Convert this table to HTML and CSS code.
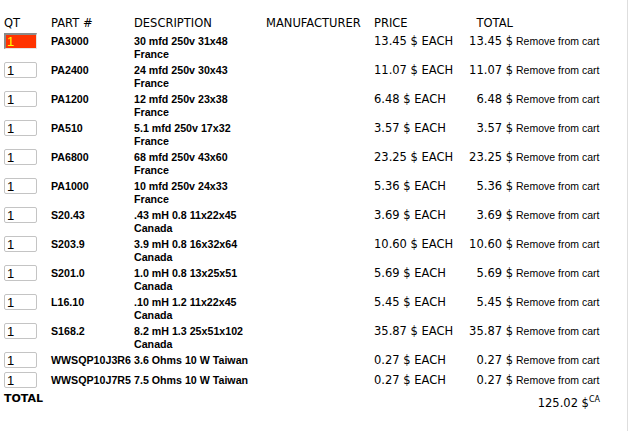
FILE: index.html
```html
<!DOCTYPE html>
<html lang="en">
<head>
<meta charset="utf-8">
<title>Cart</title>
<link rel="stylesheet" href="styles.css">
</head>
<body>
<div class="page">
<table class="cart">
<colgroup>
<col class="c-qty"><col class="c-part"><col class="c-desc"><col class="c-manuf"><col class="c-price"><col class="c-amount"><col class="c-link">
</colgroup>
<thead>
<tr><th>QT</th><th>PART #</th><th>DESCRIPTION</th><th>MANUFACTURER</th><th>PRICE</th><th class="amount">TOTAL</th><th></th></tr>
</thead>
<tbody>
<tr><td class="qty"><input class="qty-input alert" value="1"></td><td class="part">PA3000</td><td class="desc">30 mfd 250v 31x48<br>France</td><td></td><td class="price">13.45 $ EACH</td><td class="amount">13.45 $</td><td class="link">Remove from cart</td></tr>
<tr><td class="qty"><input class="qty-input" value="1"></td><td class="part">PA2400</td><td class="desc">24 mfd 250v 30x43<br>France</td><td></td><td class="price">11.07 $ EACH</td><td class="amount">11.07 $</td><td class="link">Remove from cart</td></tr>
<tr><td class="qty"><input class="qty-input" value="1"></td><td class="part">PA1200</td><td class="desc">12 mfd 250v 23x38<br>France</td><td></td><td class="price">6.48 $ EACH</td><td class="amount">6.48 $</td><td class="link">Remove from cart</td></tr>
<tr><td class="qty"><input class="qty-input" value="1"></td><td class="part">PA510</td><td class="desc">5.1 mfd 250v 17x32<br>France</td><td></td><td class="price">3.57 $ EACH</td><td class="amount">3.57 $</td><td class="link">Remove from cart</td></tr>
<tr><td class="qty"><input class="qty-input" value="1"></td><td class="part">PA6800</td><td class="desc">68 mfd 250v 43x60<br>France</td><td></td><td class="price">23.25 $ EACH</td><td class="amount">23.25 $</td><td class="link">Remove from cart</td></tr>
<tr><td class="qty"><input class="qty-input" value="1"></td><td class="part">PA1000</td><td class="desc">10 mfd 250v 24x33<br>France</td><td></td><td class="price">5.36 $ EACH</td><td class="amount">5.36 $</td><td class="link">Remove from cart</td></tr>
<tr><td class="qty"><input class="qty-input" value="1"></td><td class="part">S20.43</td><td class="desc">.43 mH 0.8 11x22x45<br>Canada</td><td></td><td class="price">3.69 $ EACH</td><td class="amount">3.69 $</td><td class="link">Remove from cart</td></tr>
<tr><td class="qty"><input class="qty-input" value="1"></td><td class="part">S203.9</td><td class="desc">3.9 mH 0.8 16x32x64<br>Canada</td><td></td><td class="price">10.60 $ EACH</td><td class="amount">10.60 $</td><td class="link">Remove from cart</td></tr>
<tr><td class="qty"><input class="qty-input" value="1"></td><td class="part">S201.0</td><td class="desc">1.0 mH 0.8 13x25x51<br>Canada</td><td></td><td class="price">5.69 $ EACH</td><td class="amount">5.69 $</td><td class="link">Remove from cart</td></tr>
<tr><td class="qty"><input class="qty-input" value="1"></td><td class="part">L16.10</td><td class="desc">.10 mH 1.2 11x22x45<br>Canada</td><td></td><td class="price">5.45 $ EACH</td><td class="amount">5.45 $</td><td class="link">Remove from cart</td></tr>
<tr><td class="qty"><input class="qty-input" value="1"></td><td class="part">S168.2</td><td class="desc">8.2 mH 1.3 25x51x102<br>Canada</td><td></td><td class="price">35.87 $ EACH</td><td class="amount">35.87 $</td><td class="link">Remove from cart</td></tr>
<tr><td class="qty"><input class="qty-input" value="1"></td><td class="part">WWSQP10J3R6</td><td class="desc">3.6 Ohms 10 W Taiwan</td><td></td><td class="price">0.27 $ EACH</td><td class="amount">0.27 $</td><td class="link">Remove from cart</td></tr>
<tr><td class="qty"><input class="qty-input" value="1"></td><td class="part">WWSQP10J7R5</td><td class="desc">7.5 Ohms 10 W Taiwan</td><td></td><td class="price">0.27 $ EACH</td><td class="amount">0.27 $</td><td class="link">Remove from cart</td></tr>
</tbody>
<tfoot>
<tr><td class="total-label" colspan="2">TOTAL</td><td></td><td></td><td></td><td class="grand" colspan="2">125.02 $<sup class="cur">CA</sup></td></tr>
</tfoot>
</table>
</div>
</body>
</html>
```
FILE: styles.css
```css
html, body {
  margin: 0;
  padding: 0;
  background: #ffffff;
}
body {
  color: #000000;
  font-family: "DejaVu Sans", Verdana, sans-serif;
}
.page {
  box-sizing: border-box;
  width: 628px;
  min-height: 431px;
  border-right: 1px solid #dedede;
  padding: 16px 0 0 4px;
}
.cart {
  border-collapse: collapse;
  table-layout: fixed;
  width: 596px;
}
.c-qty { width: 47px; }
.c-part { width: 83px; }
.c-desc { width: 132px; }
.c-manuf { width: 108px; }
.c-price { width: 86px; }
.c-amount { width: 53px; }
.c-link { width: 87px; }

.cart th {
  font-family: "DejaVu Sans", Verdana, sans-serif;
  font-size: 11.5px;
  font-weight: normal;
  line-height: 15px;
  text-align: left;
  vertical-align: top;
  padding: 0 0 1px 0;
  white-space: nowrap;
}
.cart td {
  vertical-align: top;
  padding: 3px 0 1px 0;
  line-height: 12.5px;
  white-space: nowrap;
}
.cart td.qty {
  padding: 1px 0 3px 0;
}
.qty-input {
  display: block;
  box-sizing: border-box;
  width: 33px;
  height: 16px;
  margin: 0;
  padding: 0 2px;
  font-family: "Liberation Sans", Arial, sans-serif;
  font-size: 13px;
  color: #000000;
  background: #ffffff;
  border: 1px solid #c4c4c4;
  border-radius: 2px;
}
.qty-input.alert {
  background: #ff3300;
  color: #ffff00;
  border-radius: 0;
  border-top: 2px solid #8a8a8a;
  border-left: 2px solid #8a8a8a;
  border-right: 1px solid #e4e4e4;
  border-bottom: 1px solid #e4e4e4;
  padding-left: 1px;
}
.part, .desc {
  font-family: "Liberation Sans", Arial, sans-serif;
  font-size: 8pt;
  font-weight: bold;
}
.price, .amount {
  font-family: "DejaVu Sans", Verdana, sans-serif;
  font-size: 11.5px;
}
.cart .amount {
  text-align: right;
}
.cart td.link {
  font-family: "Liberation Sans", Arial, sans-serif;
  font-size: 10.5px;
  padding-left: 3px;
}
.cart td.total-label {
  font-family: "DejaVu Sans", Verdana, sans-serif;
  font-size: 11px;
  font-weight: bold;
  padding-top: 2px;
}
.cart td.grand {
  font-family: "DejaVu Sans", Verdana, sans-serif;
  font-size: 11.5px;
  text-align: right;
  padding-top: 6px;
}
.cur {
  font-size: 8px;
  line-height: 0;
  vertical-align: 5px;
}
```
